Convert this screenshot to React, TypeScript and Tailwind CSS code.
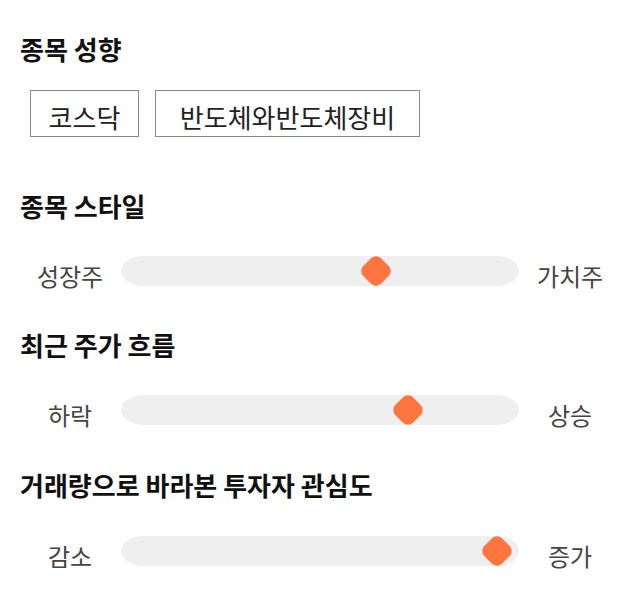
const font = { fontFamily: '"Noto Sans CJK KR", "Noto Sans", sans-serif' }

function Heading({ children, className }: { children: string; className: string }) {
  return <h2 className={`text-[26px] font-bold leading-[32px] text-[#111] ${className}`}>{children}</h2>
}

function Slider({ left, right, value, className }: { left: string; right: string; value: number; className: string }) {
  return (
    <div className={`flex h-[30px] items-start ${className}`}>
      <span className="ml-[6px] h-[30px] w-[88px] whitespace-nowrap pt-[5px] text-center text-[24px] leading-[30px] text-[#444]">
        {left}
      </span>
      <div className="relative ml-[7px] h-[30px] w-[398px] rounded-[22px/15px] bg-[#efefef]">
        <div
          className="absolute top-[15px] h-[25px] w-[25px] -translate-x-1/2 -translate-y-1/2 rotate-45 rounded-[7px] bg-[#ff753f]"
          style={{ left: `${value}%` }}
        />
      </div>
      <span className="ml-[7px] h-[30px] w-[88px] whitespace-nowrap pt-[5px] text-center text-[24px] leading-[30px] text-[#444]">
        {right}
      </span>
    </div>
  )
}

export default function App() {
  return (
    <div className="min-h-[606px] w-[640px] bg-white px-[20px] pt-[33px]" style={font}>
      <Heading className="">종목 성향</Heading>
      <div className="ml-[10px] mt-[25px] flex gap-[16px]">
        <div className="h-[47px] w-[109px] border border-[#888] pt-[10px] text-center text-[26px] leading-[32px] text-[#222]">
          코스닥
        </div>
        <div className="h-[47px] w-[265px] whitespace-nowrap border border-[#888] pt-[10px] text-center text-[26px] leading-[32px] text-[#222]">
          반도체와반도체장비
        </div>
      </div>

      <Heading className="mt-[53px]">종목 스타일</Heading>
      <Slider className="mt-[34px]" left="성장주" right="가치주" value={64} />

      <Heading className="mt-[43px]">최근 주가 흐름</Heading>
      <Slider className="mt-[34px]" left="하락" right="상승" value={72} />

      <Heading className="mt-[44px]">거래량으로 바라본 투자자 관심도</Heading>
      <Slider className="mt-[35px]" left="감소" right="증가" value={94.5} />
    </div>
  )
}
